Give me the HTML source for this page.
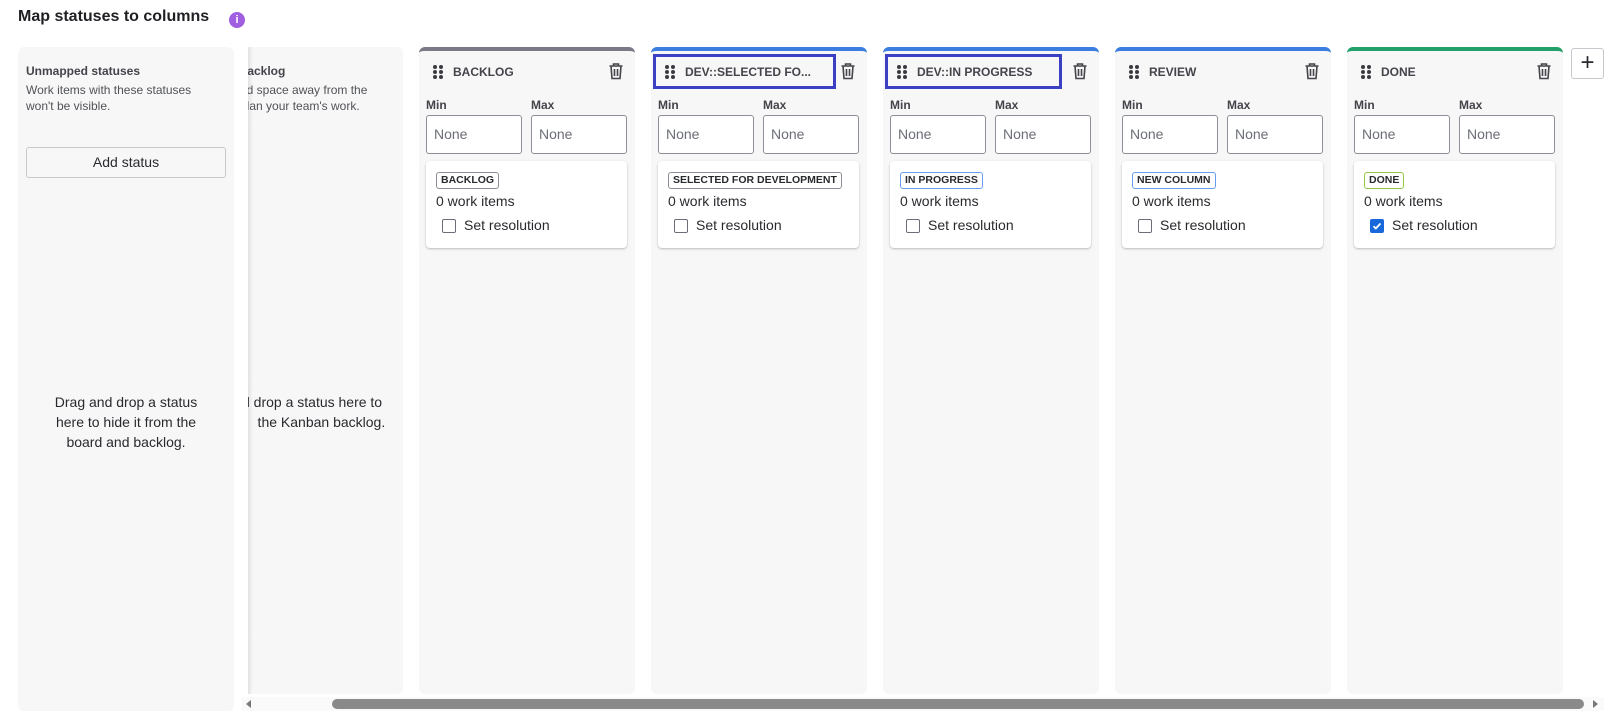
<!DOCTYPE html>
<html><head><meta charset="utf-8"><style>
*{box-sizing:border-box;margin:0;padding:0}
body{width:1623px;height:723px;background:#fff;font-family:"Liberation Sans",sans-serif;color:#292a2e;position:relative;overflow:hidden}
.abs{position:absolute}
h1{position:absolute;left:18px;top:8px;font-size:16px;font-weight:bold;color:#1f2024}
.info{position:absolute;left:229px;top:12px;width:16px;height:16px;border-radius:50%;background:#9f5fe0;color:#fff;font-size:11px;font-weight:bold;text-align:center;line-height:16px}
.panel{position:absolute;background:#f7f7f7;border-radius:6px}
.col{position:absolute;top:47px;width:216px;height:647px;background:#f7f7f7;border-radius:6px;border-top:4px solid #7a7a86}
.hdr{position:absolute;left:14px;top:11px;height:20px;font-size:12px;font-weight:bold;color:#44454b;line-height:20px;padding-left:20px}
.dots{position:absolute;left:0;top:3px;width:10px;height:14px}
.dots i{position:absolute;width:4px;height:4px;border-radius:50%;background:#3a3b40}
.trash{position:absolute;left:189px;top:11px}
.lbl{position:absolute;top:47px;font-size:12px;font-weight:bold;color:#44454b}
.inp{position:absolute;top:64px;width:96px;height:39px;background:#fff;border:1px solid #8c8f97;border-radius:3px;font-size:14px;color:#6b6e76;padding:10px 7px}
.card{position:absolute;left:7px;top:110px;width:201px;height:87px;background:#fff;border-radius:4px;box-shadow:0 1px 2px rgba(0,0,0,.25)}
.tag{position:absolute;left:10px;top:11px;height:17px;padding:0 4px;border:1px solid #8c8f97;border-radius:3px;font-size:10.5px;font-weight:bold;line-height:15px;color:#292a2e}
.wi{position:absolute;left:10px;top:32px;font-size:14px}
.cb{position:absolute;left:16px;top:58px;width:14px;height:14px;border:1px solid #6b6e76;border-radius:2px;background:#fff}
.cbl{position:absolute;left:38px;top:56px;font-size:14px}
.focus{position:absolute;border:3px solid #3b3fc4}
</style></head><body>
<h1>Map statuses to columns</h1>
<div class="info">i</div>

<div class="panel" style="left:18px;top:47px;width:216px;height:664px">
  <div class="abs" style="left:8px;top:17px;font-size:12px;font-weight:bold;color:#44454b">Unmapped statuses</div>
  <div class="abs" style="left:8px;top:35px;font-size:12px;line-height:16px;color:#505258;width:180px">Work items with these statuses won't be visible.</div>
  <div class="abs" style="left:8px;top:100px;width:200px;height:31px;border:1px solid #c7c9cf;border-radius:3px;background:#f7f7f7;text-align:center;line-height:29px;font-size:14px">Add status</div>
  <div class="abs" style="left:0;top:345px;width:216px;text-align:center;font-size:14px;line-height:20px">Drag and drop a status<br>here to hide it from the<br>board and backlog.</div>
</div>

<div class="panel" style="left:248px;top:47px;width:155px;height:647px;overflow:hidden;border-radius:0 6px 6px 0">
  <div class="abs" style="left:0;top:0;width:5px;height:647px;background:linear-gradient(90deg,#e2e2e2,#f7f7f7)"></div>
  <div class="abs" style="left:-8px;top:17px;font-size:12px;font-weight:bold;color:#44454b">backlog</div>
  <div class="abs" style="left:-8px;top:35px;font-size:12px;line-height:16px;color:#505258;white-space:nowrap">ed space away from the<br>plan your team's work.</div>
  <div class="abs" style="left:-6px;top:345px;font-size:14px;line-height:20px;white-space:nowrap">d drop a status here to<br>&nbsp;&nbsp;&nbsp;&nbsp;the Kanban backlog.</div>
</div>

<div class="col" style="left:419px;border-top-color:#7a7a86"></div>
<div class="col" style="left:651px;border-top-color:#3b7de0"></div>
<div class="col" style="left:883px;border-top-color:#3b7de0"></div>
<div class="col" style="left:1115px;border-top-color:#3b7de0"></div>
<div class="col" style="left:1347px;border-top-color:#22a06b"></div>

<script>
var data=[["BACKLOG","BACKLOG","#8c8f97",0],["DEV::SELECTED FO...","SELECTED FOR DEVELOPMENT","#8c8f97",0],["DEV::IN PROGRESS","IN PROGRESS","#669df1",0],["REVIEW","NEW COLUMN","#669df1",0],["DONE","DONE","#94c748",1]];
var cols=document.querySelectorAll('.col');
var dots='<span class="dots"><i style="left:0;top:0"></i><i style="left:6px;top:0"></i><i style="left:0;top:5px"></i><i style="left:6px;top:5px"></i><i style="left:0;top:10px"></i><i style="left:6px;top:10px"></i></span>';
var trash='<svg class="trash" width="16" height="18" viewBox="0 0 16 18" fill="none" stroke="#44454b" stroke-width="1.6"><path d="M1.5 4h13M5.5 4V2h5v2M3 4l1 12.5h8L13 4M6.5 7v7M9.5 7v7"/></svg>';
cols.forEach(function(c,i){var d=data[i];
c.innerHTML='<div class="hdr">'+dots+d[0]+'</div>'+trash+
'<div class="lbl" style="left:7px">Min</div><div class="lbl" style="left:112px">Max</div>'+
'<div class="inp" style="left:7px">None</div><div class="inp" style="left:112px">None</div>'+
'<div class="card"><div class="tag" style="border-color:'+d[2]+'">'+d[1]+'</div><div class="wi">0 work items</div>'+
(d[3]?'<div class="cb" style="background:#1868db;border-color:#1868db"><svg width="12" height="12" viewBox="0 0 12 12" style="position:absolute;left:0;top:0"><path d="M2.5 6.2l2.3 2.3 4.7-5" stroke="#fff" stroke-width="1.8" fill="none"/></svg></div>':'<div class="cb"></div>')+
'<div class="cbl">Set resolution</div></div>';});
</script>
<div class="focus" style="left:653px;top:54px;width:183px;height:35px"></div>
<div class="focus" style="left:885px;top:54px;width:177px;height:35px"></div>

<div class="abs" style="left:1571px;top:48px;width:33px;height:31px;border:1px solid #c7c9cf;border-radius:3px;background:#fff;text-align:center;font-size:24px;line-height:27px;color:#292a2e">+</div>

<div class="abs" style="left:242px;top:697px;width:1362px;height:14px;background:#fafafa"></div>
<div class="abs" style="left:246px;top:700px;width:0;height:0;border-top:4px solid transparent;border-bottom:4px solid transparent;border-right:5px solid #777"></div>
<div class="abs" style="left:332px;top:699px;width:1252px;height:10px;border-radius:5px;background:#8a8a8a"></div>
<div class="abs" style="left:1593px;top:700px;width:0;height:0;border-top:4px solid transparent;border-bottom:4px solid transparent;border-left:5px solid #777"></div>
</body></html>
